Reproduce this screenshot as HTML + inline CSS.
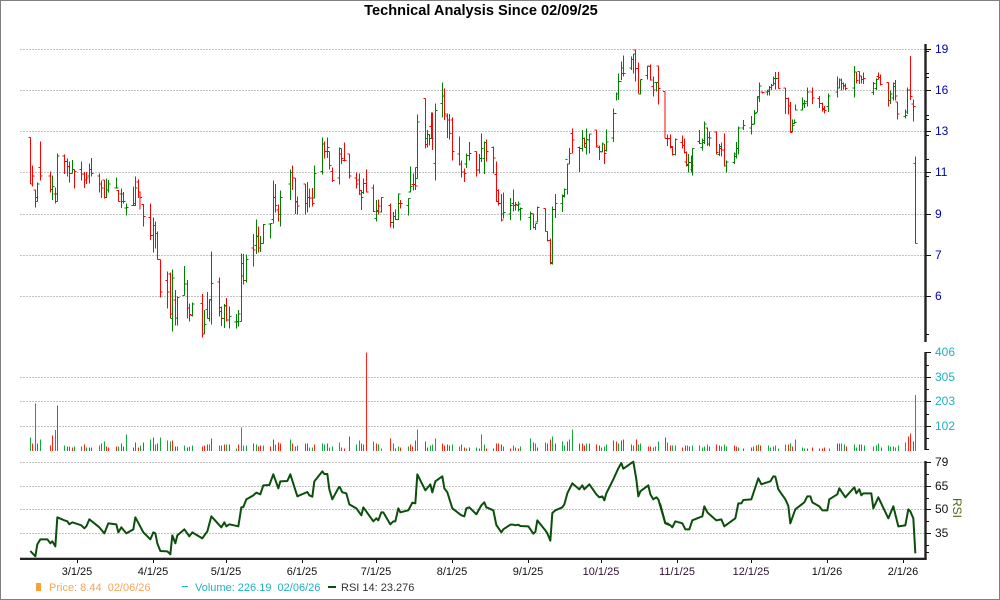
<!DOCTYPE html>
<html><head><meta charset="utf-8"><title>Technical Analysis</title>
<style>html,body{margin:0;padding:0;background:#fff}svg{display:block}text{font-family:"Liberation Sans",sans-serif}</style></head>
<body>
<svg width="1000" height="600" viewBox="0 0 1000 600" xmlns="http://www.w3.org/2000/svg">
<rect width="1000" height="600" fill="#fff"/>
<rect x=".5" y=".5" width="999" height="599" fill="none" stroke="#808080"/>
<text x="481" y="15" font-size="14.6" font-weight="bold" text-anchor="middle" fill="#000">Technical Analysis Since 02/09/25</text>
<g stroke="#c2c2c2" stroke-dasharray="2 1" fill="none" shape-rendering="crispEdges">
<path d="M20 49.5H925M20 90.5H925M20 131.5H925M20 172.5H925M20 214.5H925M20 255.5H925M20 296.5H925M20 377.5H925M20 401.5H925M20 426.5H925M20 462.5H925M20 486.5H925M20 509.5H925M20 533.5H925"/>
</g>
<g fill="none" stroke-width="3" shape-rendering="crispEdges">
<g transform="translate(.17 130) scale(.33333)">
<path stroke="#ff0000" d="M91 22V162M85 22h6M91 162h6M97 106V170M91 162h6M97 138h6M106 180V233M100 180h6M106 214h6M121 34V152M115 112h6M121 138h6M151 124V188M145 138h6M151 178h6M166 172V220M160 192h6M166 214h6M193 74V132M187 78h6M193 94h6M202 86V140M196 94h6M202 110h6M208 94V158M202 110h6M208 130h6M223 118V176M217 118h6M223 124h6M244 94V152M238 118h6M244 132h6M253 126V174M247 132h6M253 150h6M259 126V162M253 150h6M259 144h6M274 84V140M268 118h6M274 130h6M298 130V188M292 138h6M298 162h6M304 152V204M304 174h6M313 150V205M307 150h6M355 180V214M349 182h6M355 214h6M370 186V220M364 214h6M370 214h6M415 148V204M409 156h6M415 186h6M419 186V238M419 202h6M430 222V290M424 224h6M430 260h6M451 220V330M445 262h6M451 316h6M466 274V356M460 286h6M466 310h6M472 304V388M472 388h6M481 388V502M475 388h6M481 486h6M502 424V536M496 452h6M502 486h6M511 428V564M505 432h6M511 552h6M526 480V586M520 510h6M526 564h6M562 450V566M556 462h6M562 534h6M568 520V574M562 534h6M568 554h6M607 492V622M601 520h6M607 612h6M622 486V566M616 538h6M622 566h6M658 442V560M652 456h6M658 532h6M664 530V588M658 544h6M664 566h6M679 504V574M673 528h6M679 570h6M730 372V464M724 400h6M730 452h6M760 312V410M754 354h6M760 360h6M775 290V368M769 318h6M775 354h6M826 162V248M820 202h6M826 226h6M835 224V274M829 240h6M835 254h6M877 106V180M871 128h6M877 144h6M886 144V252M880 144h6M886 216h6M892 200V254M886 214h6M892 228h6M916 162V254M910 162h6M916 220h6M928 176V232M922 202h6M928 204h6M937 174V230M931 204h6M937 220h6M973 34V86M967 42h6M973 64h6M988 64V118M982 64h6M988 106h6M997 112V156M991 124h6M997 152h6"/>
<path stroke="#008000" d="M112 158V214M106 202h6M112 162h6M157 136V210M151 178h6M157 169h6M172 70V214M166 192h6M172 78h6M217 90V130M211 130h6M217 118h6M268 100V160M262 138h6M268 118h6M319 145V204M313 202h6M319 180h6M325 150V188M319 180h6M325 162h6M349 142V175M343 174h6M349 174h6M364 176V234M358 192h6M364 192h6M379 220V256M373 234h6M379 232h6M400 170V228M394 226h6M400 226h6M406 140V228M400 220h6M406 174h6M460 262V368M454 316h6M460 286h6M517 418V604M511 566h6M517 444h6M532 500V586M526 564h6M532 502h6M553 408V496M547 496h6M553 462h6M577 518V560M571 556h6M577 522h6M613 540V612M613 584h6M628 508V574M622 566h6M628 508h6M634 364V584M628 510h6M634 460h6M673 522V594M667 566h6M673 526h6M688 530V596M682 570h6M688 560h6M709 552V596M703 576h6M709 576h6M715 540V590M709 574h6M715 552h6M724 370V574M718 574h6M724 438h6M739 374V458M733 452h6M739 388h6M769 268V372M763 346h6M769 320h6M781 318V366M775 354h6M781 340h6M790 282V340M784 340h6M790 284h6M811 280V326M805 282h6M811 280h6M820 152V280M814 268h6M820 202h6M841 182V290M835 254h6M841 202h6M871 118V210M865 162h6M871 128h6M922 156V248M916 220h6M922 202h6M943 106V206M937 204h6M943 130h6M967 22V134M961 124h6M967 42h6M982 22V84M976 64h6M982 52h6"/>
</g>
<g transform="translate(330.17 40) scale(.33333)">
<path stroke="#ff0000" d="M34 325V372M28 342h6M34 356h6M43 308V364M37 362h6M43 362h6M58 342V416M52 342h6M58 408h6M79 398V446M73 414h6M79 432h6M88 400V465M82 420h6M88 452h6M94 450V510M88 462h6M94 472h6M109 388V458M103 430h6M109 456h6M130 434V516M124 444h6M130 514h6M145 478V524M139 512h6M145 498h6M181 490V563M175 496h6M181 548h6M196 508V540M190 530h6M196 538h6M211 480V506M205 490h6M211 490h6M250 400V452M244 434h6M250 434h6M256 382V450M256 382h6M256 438h6M286 176V326M280 176h6M286 314h6M304 218V296M298 260h6M304 296h6M307 218V330M343 146V240M337 168h6M343 222h6M352 220V294M346 228h6M352 240h6M358 222V298M352 240h6M358 280h6M367 232V362M361 240h6M367 334h6M388 290V376M382 342h6M388 372h6M394 362V412M388 372h6M394 396h6M403 386V426M397 396h6M403 400h6M439 334V410M433 334h6M439 390h6M469 298V364M463 308h6M469 334h6M490 320V400M484 322h6M490 354h6M499 364V486M493 404h6M499 452h6M505 448V496M499 484h6M505 490h6M514 462V544M508 490h6M514 540h6M550 448V514M544 490h6M550 496h6M556 486V512M550 496h6M556 494h6M610 520V566M604 522h6M646 506V574M640 506h6M646 574h6M652 574V604M646 574h6M652 602h6M661 596V674M655 602h6M661 670h6M727 266V340M721 280h6M727 300h6M748 320V396M742 322h6M748 326h6M763 292V322M757 296h6M763 322h6M799 270V322M793 270h6M799 318h6M808 316V360M802 322h6M808 334h6M823 312V372M817 312h6M823 340h6M880 46V110M874 100h6M880 100h6M916 30V125M910 30h6M916 86h6M925 68V160M919 86h6M925 162h6M961 74V122M955 80h6M961 120h6M970 110V170M964 140h6M970 150h6M985 78V194M979 78h6M985 146h6M1004 154V296M998 154h6M1004 296h6"/>
<path stroke="#008000" d="M28 322V434M22 414h6M28 326h6M100 415V462M94 458h6M100 430h6M139 480V545M133 535h6M139 514h6M154 472V518M148 516h6M154 472h6M190 516V566M184 548h6M190 530h6M205 460V540M199 538h6M205 462h6M235 476V526M229 496h6M235 476h6M241 380V458M235 456h6M241 440h6M262 224V416M256 416h6M262 246h6M292 270V322M286 296h6M292 284h6M298 282V316M292 284h6M298 296h6M316 190V422M310 370h6M316 212h6M337 128V232M331 190h6M337 168h6M409 340V384M403 372h6M409 346h6M418 306V362M412 346h6M418 340h6M448 342V400M442 390h6M448 356h6M454 280V366M448 356h6M454 326h6M463 305V402M457 356h6M463 308h6M520 458V536M514 522h6M520 518h6M541 474V540M535 522h6M541 496h6M565 484V514M559 496h6M565 492h6M571 502V542M565 508h6M571 505h6M601 514V570M595 532h6M601 520h6M616 552V570M610 562h6M616 550h6M622 500V546M616 546h6M622 502h6M667 500V674M661 668h6M667 508h6M676 462V534M670 508h6M676 490h6M697 464V516M691 490h6M697 470h6M703 446V472M697 466h6M703 448h6M712 370V464M706 358h6M712 372h6M718 324V372M712 372h6M718 340h6M757 270V334M751 326h6M757 296h6M769 266V344M763 310h6M769 298h6M778 282V340M772 300h6M778 282h6M817 308V336M811 336h6M817 312h6M829 268V334M823 332h6M829 306h6M850 205V306M844 294h6M850 220h6M859 158V182M853 220h6M859 162h6M865 100V180M859 162h6M865 124h6M874 64V120M868 124h6M874 84h6M904 50V90M898 84h6M904 58h6M910 42V100M904 58h6M910 42h6M931 118V164M925 162h6M931 118h6M952 78V118M946 106h6M952 78h6M979 128V154M973 128h6M979 128h6"/>
</g>
<g transform="translate(660.17 40) scale(.33333)">
<path stroke="#ff0000" d="M22 284V318M16 296h6M22 296h6M31 284V326M25 296h6M31 320h6M37 318V346M31 322h6M37 344h6M67 286V326M61 308h6M67 316h6M73 296V340M67 316h6M73 338h6M79 334V380M73 366h6M79 376h6M94 346V398M88 368h6M94 376h6M118 270V312M112 304h6M118 310h6M142 262V318M136 264h6M142 292h6M169 274V344M163 276h6M169 338h6M184 308V350M178 326h6M184 330h6M193 280V380M187 330h6M193 378h6M307 154V160M301 156h6M307 158h6M355 96V146M349 116h6M355 146h6M376 144V222M370 144h6M376 176h6M385 172V224M379 176h6M385 198h6M391 186V278M385 198h6M391 278h6M457 142V192M451 156h6M457 174h6M478 168V204M472 176h6M478 190h6M487 188V214M481 190h6M487 208h6M493 198V220M487 205h6M493 212h6M544 116V152M538 120h6M544 130h6M550 128V148M544 130h6M550 136h6M556 130V150M550 138h6M556 146h6M589 96V130M583 96h6M589 122h6M598 94V132M592 94h6M598 108h6M610 98V132M604 118h6M610 116h6M655 98V118M649 110h6M655 112h6M661 104V136M655 112h6M661 134h6M685 128V200M679 128h6M685 182h6M706 120V182M700 130h6M706 168h6M712 186V238M706 186h6M712 222h6M751 48V180M745 150h6M751 170h6M760 178V244M754 192h6M760 200h6M766 350V610M760 370h6M766 610h6"/>
<path stroke="#008000" d="M46 296V346M40 344h6M46 298h6M85 342V398M79 374h6M85 368h6M97 326V406M91 388h6M97 326h6M127 296V332M121 322h6M127 302h6M133 244V312M127 308h6M133 252h6M148 274V320M142 312h6M148 294h6M178 312V348M172 344h6M178 320h6M199 362V398M193 378h6M199 366h6M223 338V372M217 368h6M223 342h6M229 306V356M223 350h6M229 326h6M235 260V344M229 326h6M235 264h6M250 240V270M244 264h6M250 256h6M274 228V284M268 264h6M274 254h6M283 210V254M277 252h6M283 220h6M292 170V216M286 218h6M292 174h6M298 128V186M292 170h6M298 138h6M322 150V166M316 156h6M322 154h6M328 138V166M322 150h6M328 142h6M334 132V150M328 142h6M334 136h6M340 110V136M334 136h6M340 116h6M346 96V148M340 130h6M346 116h6M397 238V276M391 274h6M397 256h6M403 238V252M397 250h6M403 248h6M406 194V212M406 210h6M427 172V212M421 210h6M427 190h6M433 180V204M427 192h6M433 190h6M442 142V200M436 184h6M442 156h6M505 160V216M499 200h6M505 168h6M532 110V172M526 156h6M532 144h6M538 116V146M532 144h6M538 120h6M583 78V172M577 144h6M583 96h6M604 108V130M640 126V165M634 158h6M640 130h6M649 116V150M643 146h6M649 118h6M691 152V192M685 182h6M691 162h6M700 128V182M694 174h6M700 140h6M736 208V236M730 230h6M736 226h6M742 142V222M736 216h6M742 150h6"/>
</g>
<g transform="translate(.17 340) scale(.33333)">
<path stroke="#ff2010" d="M97 333V310M112 333V310M151 333V316M157 333V286M172 333V196M202 333V319M208 333V319M217 333V322M253 333V313M268 333V322M274 333V322M304 333V310M319 333V319M325 333V322M349 333V319M364 333V310M370 333V319M400 333V322M406 333V307M415 333V322M430 333V307M460 333V292M472 333V310M517 333V301M526 333V319M562 333V322M607 333V319M613 333V316M622 333V313M634 333V295M664 333V316M673 333V313M688 333V313M715 333V313M760 333V310M775 333V319M781 333V316M811 333V319M820 333V298M835 333V307M841 333V310M877 333V310M916 333V310M922 333V310M943 333V313M982 333V310"/>
<path stroke="#12a83c" d="M91 333V292M106 333V190M121 333V298M166 333V270M193 333V316M223 333V319M244 333V319M259 333V322M298 333V316M313 333V304M355 333V319M379 333V283M421 333V316M451 333V298M466 333V313M481 333V292M502 333V301M511 333V304M532 333V319M553 333V316M568 333V319M577 333V316M628 333V313M658 333V316M679 333V313M709 333V325M724 333V262M730 333V316M739 333V316M769 333V313M790 333V316M826 333V313M871 333V298M886 333V319M892 333V316M928 333V322M937 333V322M967 333V310M973 333V313M988 333V322M997 333V319"/>
</g>
<g transform="translate(330.17 340) scale(.33333)">
<path stroke="#ff2010" d="M34 333V322M43 333V325M58 333V289M94 333V310M100 333V313M109 333V37M139 333V310M181 333V295M196 333V325M211 333V322M241 333V313M247 333V319M256 333V301M286 333V304M292 333V322M337 333V310M343 333V316M352 333V313M358 333V316M394 333V313M403 333V322M418 333V322M448 333V325M469 333V325M490 333V325M499 333V310M505 333V310M514 333V313M541 333V325M565 333V325M610 333V307M622 333V322M652 333V310M661 333V298M676 333V310M712 333V304M748 333V310M757 333V310M763 333V316M778 333V310M799 333V313M808 333V316M814 333V322M850 333V301M859 333V304M874 333V301M880 333V298M904 333V313M919 333V298M955 333V319M961 333V319M1006 333V292"/>
<path stroke="#12a83c" d="M7 333V319M28 333V307M79 333V313M88 333V301M130 333V304M145 333V313M154 333V325M190 333V310M205 333V319M235 333V319M262 333V268M301 333V316M307 333V313M316 333V295M367 333V313M388 333V319M409 333V325M439 333V322M454 333V283M463 333V313M520 333V319M550 333V316M556 333V322M571 333V319M601 333V295M616 333V310M646 333V307M667 333V289M697 333V304M703 333V316M718 333V298M727 333V268M769 333V310M823 333V319M829 333V313M865 333V310M910 333V316M925 333V313M931 333V310M970 333V322M976 333V319M985 333V304M1012 333V307"/>
</g>
<g transform="translate(660.17 340) scale(.33333)">
<path stroke="#ff2010" d="M16 333V292M31 333V316M67 333V322M76 333V316M88 333V319M148 333V319M169 333V313M178 333V316M223 333V316M229 333V319M250 333V325M274 333V322M280 333V319M289 333V316M301 333V316M340 333V319M385 333V313M397 333V319M442 333V325M457 333V322M478 333V325M487 333V325M493 333V322M532 333V310M538 333V310M559 333V319M598 333V313M604 333V313M664 333V322M700 333V319M745 333V289M751 333V280M760 333V304"/>
<path stroke="#12a83c" d="M22 333V307M37 333V316M46 333V316M82 333V316M97 333V316M118 333V316M127 333V322M133 333V319M142 333V313M184 333V319M193 333V313M199 333V319M235 333V322M295 333V313M325 333V316M331 333V322M346 333V316M355 333V325M376 333V313M391 333V310M406 333V298M427 333V322M433 333V325M508 333V325M544 333V310M553 333V313M583 333V313M589 333V322M613 333V316M640 333V319M649 333V316M655 333V310M685 333V316M691 333V319M706 333V322M715 333V316M736 333V307M766 333V165"/>
</g>
</g>
<g fill="none" stroke="#0c4f0c" stroke-width="6" stroke-linejoin="round">
<polyline transform="translate(0 455) scale(.33333)" points="91,288 106,304 112,268 121,253 142,253 151,265 157,259 166,274 172,187 193,196 202,199 208,208 217,202 244,211 253,220 259,214 268,193 298,217 313,235 325,205 349,208 355,232 364,217 379,235 400,223 406,187 430,232 451,253 460,232 466,235 472,265 481,288 502,289 511,298 517,241 526,265 532,241 553,223 568,244 577,232 607,250 622,229 634,184 664,217 673,202 679,214 688,208 715,214 724,157 730,156 739,133 760,121 769,113 781,118 790,91 808,90 820,58 835,100 841,79 862,78 871,58 892,124 922,111 928,121 937,125 943,79 967,49 973,57 982,57 988,103 997,133 1018,94"/>
<polyline transform="translate(330 455) scale(.33333)" points="28,94 37,112 49,115 58,148 79,160 94,181 100,157 130,199 139,190 145,196 154,172 160,172 181,208 190,199 196,199 205,160 211,172 235,166 247,143 256,145 262,58 286,106 301,88 307,112 316,79 337,64 343,100 352,112 367,160 394,181 403,184 409,160 418,157 439,178 454,151 463,142 469,157 490,166 499,210 514,232 520,223 541,209 550,209 556,211 565,209 571,213 595,214 610,236 616,231 622,196 646,226 652,235 661,257 667,174 676,166 697,157 703,148 712,115 727,85 748,103 757,91 763,103 778,88 799,118 808,127 817,124 823,136 829,115 850,73 865,40 874,24 880,41 910,20 919,73 925,124 931,109 955,91 961,118 970,133 979,127 985,133 1006,205 1012,205 1020,211"/>
<polyline transform="translate(660 455) scale(.33333)" points="0,145 16,205 31,211 37,217 46,199 67,205 76,223 88,223 97,196 127,184 133,154 142,172 169,196 184,193 193,214 226,190 235,145 244,145 250,135 274,133 295,70 304,88 331,79 340,64 346,65 355,103 376,133 385,153 391,205 406,163 433,142 442,124 451,124 457,142 478,154 487,166 502,166 508,133 532,118 538,100 556,127 583,97 589,115 598,103 604,121 610,115 634,115 640,160 655,127 685,190 700,154 715,214 736,211 745,163 751,169 760,190 766,295"/>
</g>
<g fill="#222">
<rect x="924.3" y="44" width="2.4" height="298"/>
<rect x="924.3" y="352" width="2.4" height="98"/>
<rect x="924.3" y="461" width="2.4" height="98"/>
<rect x="20" y="557.7" width="906.7" height="2.3"/>
</g>
<g stroke="#111" fill="none" shape-rendering="crispEdges">
<path d="M926 49.5h5M926 51.5h3M926 73.5h3M926 77.5h3M926 90.5h5M926 115.5h3M926 119.5h3M926 131.5h5M926 135.5h3M926 159.5h3M926 172.5h5M926 176.5h3M926 214.5h5M926 255.5h5M926 296.5h5M926 334.5h3"/>
<path d="M926 352.5h5M926 365.5h3M926 377.5h5M926 389.5h3M926 401.5h5M926 414.5h3M926 426.5h5M926 438.5h3M926 449.5h3"/>
<path d="M926 462.5h5M926 474.5h3M926 486.5h5M926 498.5h3M926 509.5h5M926 521.5h3M926 533.5h5M926 545.5h3M926 552.5h3"/>
<path d="M77.5 560v3M153.5 560v3M226.5 560v3M302.5 560v3M376.5 560v3M452.5 560v3M528.5 560v3M601.5 560v3M677.5 560v3M751.5 560v3M827.5 560v3M903.5 560v3"/>
</g>
<g font-size="12" fill="#0000b0">
<text x="935" y="53">19</text><text x="935" y="94">16</text><text x="935" y="135">13</text><text x="935" y="176">11</text><text x="935" y="218">9</text><text x="935" y="259">7</text><text x="935" y="300">6</text>
</g>
<g font-size="12" fill="#20b0c0">
<text x="935" y="356">406</text><text x="935" y="381">305</text><text x="935" y="405">203</text><text x="935" y="430">102</text>
</g>
<g font-size="12" fill="#111">
<text x="935" y="466">79</text><text x="935" y="490">65</text><text x="935" y="513">50</text><text x="935" y="537">35</text>
</g>
<text transform="translate(953 498) rotate(90)" font-size="12" fill="#4f6b10">RSI</text>
<g font-size="11" fill="#111" text-anchor="middle">
<text x="77" y="575">3/1/25</text><text x="153" y="575">4/1/25</text><text x="226" y="575">5/1/25</text><text x="302" y="575">6/1/25</text><text x="376" y="575">7/1/25</text><text x="452" y="575">8/1/25</text><text x="528" y="575">9/1/25</text><text x="601" y="575" fill="#301030">10/1/25</text><text x="677" y="575" fill="#301030">11/1/25</text><text x="751" y="575" fill="#301030">12/1/25</text><text x="827" y="575">1/1/26</text><text x="903" y="575">2/1/26</text>
</g>
<rect x="36" y="583" width="5" height="8" fill="#f7a035"/>
<text x="49" y="591" font-size="11" fill="#f5a55a" xml:space="preserve">Price: 8.44  02/06/26</text>
<rect x="182" y="586" width="6" height="1" fill="#20b0c0"/>
<text x="195" y="591" font-size="11" fill="#20b0c0" xml:space="preserve">Volume: 226.19  02/06/26</text>
<rect x="328" y="586" width="8" height="2" fill="#0c4f0c"/>
<text x="341" y="591" font-size="11" fill="#333">RSI 14: 23.276</text>
</svg>
</body></html>
